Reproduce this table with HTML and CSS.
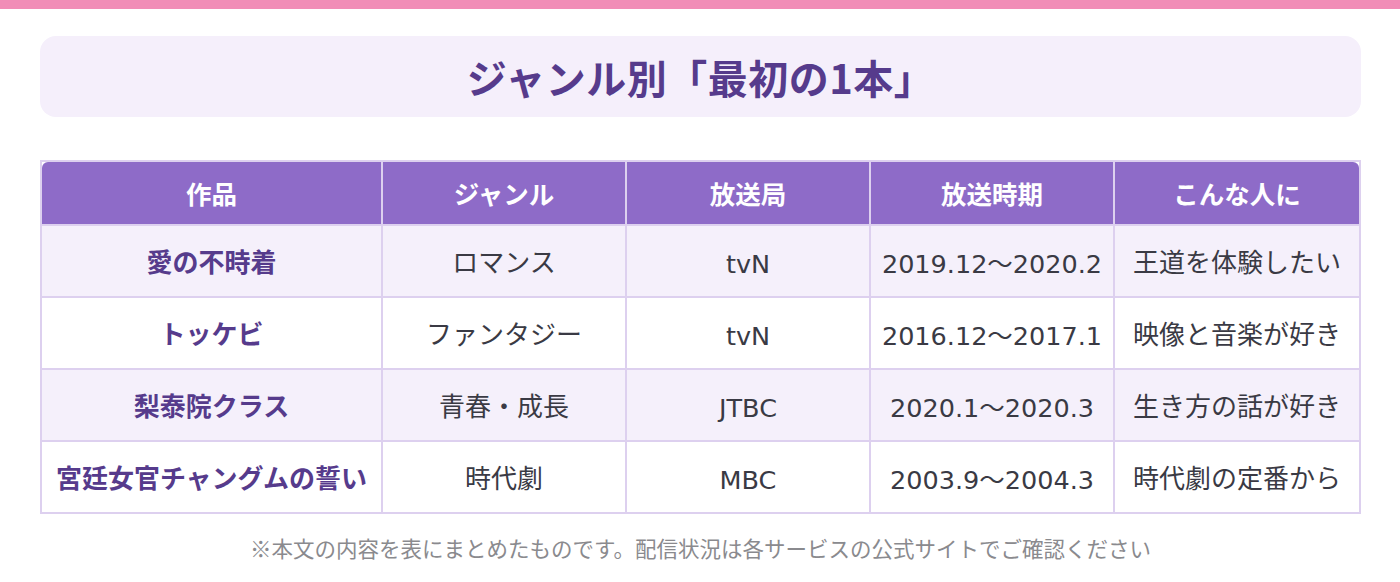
FILE: index.html
```html
<!DOCTYPE html>
<html lang="ja">
<head>
<meta charset="utf-8">
<title>ジャンル別「最初の1本」</title>
<link rel="stylesheet" href="styles.css">
</head>
<body>
<div class="topbar"></div>
<main class="wrap">
  <div class="title-box">
    <h2 class="title">ジャンル別「最初の1本」</h2>
  </div>
  <table class="guide">
    <colgroup>
      <col class="c-first">
      <col><col><col><col>
    </colgroup>
    <thead>
      <tr>
        <th>作品</th>
        <th>ジャンル</th>
        <th>放送局</th>
        <th>放送時期</th>
        <th>こんな人に</th>
      </tr>
    </thead>
    <tbody>
      <tr class="alt">
        <td class="name">愛の不時着</td>
        <td>ロマンス</td>
        <td class="latin">tvN</td>
        <td class="latin">2019.12〜2020.2</td>
        <td>王道を体験したい</td>
      </tr>
      <tr>
        <td class="name">トッケビ</td>
        <td>ファンタジー</td>
        <td class="latin">tvN</td>
        <td class="latin">2016.12〜2017.1</td>
        <td>映像と音楽が好き</td>
      </tr>
      <tr class="alt">
        <td class="name">梨泰院クラス</td>
        <td>青春・成長</td>
        <td class="latin">JTBC</td>
        <td class="latin">2020.1〜2020.3</td>
        <td>生き方の話が好き</td>
      </tr>
      <tr>
        <td class="name">宮廷女官チャングムの誓い</td>
        <td>時代劇</td>
        <td class="latin">MBC</td>
        <td class="latin">2003.9〜2004.3</td>
        <td>時代劇の定番から</td>
      </tr>
    </tbody>
  </table>
  <p class="note">※本文の内容を表にまとめたものです。配信状況は各サービスの公式サイトでご確認ください</p>
</main>
</body>
</html>
```

FILE: styles.css
```css
html, body {
  margin: 0;
  padding: 0;
  background: #ffffff;
}

body {
  font-family: "Noto Sans CJK JP", "Noto Sans", sans-serif;
  color: #3a3a44;
}

.topbar {
  height: 9px;
  background: #f18db7;
}

.wrap {
  padding: 27px 39px 0 40px;
}

.title-box {
  background: #f5effb;
  border-radius: 16px;
  height: 81px;
  display: flex;
  align-items: center;
  justify-content: center;
}

.title {
  margin: 0;
  font-size: 40px;
  font-weight: 700;
  color: #563b8c;
  letter-spacing: 0.5px;
  line-height: 1;
}

.guide {
  margin-top: 43px;
  width: 100%;
  border-collapse: separate;
  border-spacing: 0;
  border: 2px solid #ddd0ef;
  background: #ffffff;
  table-layout: fixed;
}

.c-first {
  width: 341px;
}

.guide th,
.guide td {
  text-align: center;
  vertical-align: middle;
  border-right: 2px solid #ddd0ef;
  border-bottom: 2px solid #ddd0ef;
  padding: 0;
  font-size: 25.5px;
  line-height: 36px;
  white-space: nowrap;
}

.guide th:last-child,
.guide td:last-child {
  border-right: none;
}

.guide tbody tr:last-child td {
  border-bottom: none;
}

.guide th {
  height: 62px;
  background: #8e6bc8;
  color: #ffffff;
  font-weight: 700;
}

.guide th:first-child {
  border-top-left-radius: 6px;
}

.guide th:last-child {
  border-top-right-radius: 6px;
}

.guide td {
  height: 70px;
  font-weight: 400;
  font-size: 26px;
  color: #3a3a44;
}

.guide td.latin {
  font-family: "DejaVu Sans", "Noto Sans CJK JP", sans-serif;
  font-size: 25.5px;
  padding-top: 5px;
  height: 65px;
}

.guide tr.alt td {
  background: #f5f0fb;
}

.guide td.name {
  font-weight: 700;
  color: #563b8c;
}

.note {
  margin: 18px 0 0;
  text-align: center;
  font-size: 21.5px;
  color: #8a8a8e;
  line-height: 32px;
}
```
